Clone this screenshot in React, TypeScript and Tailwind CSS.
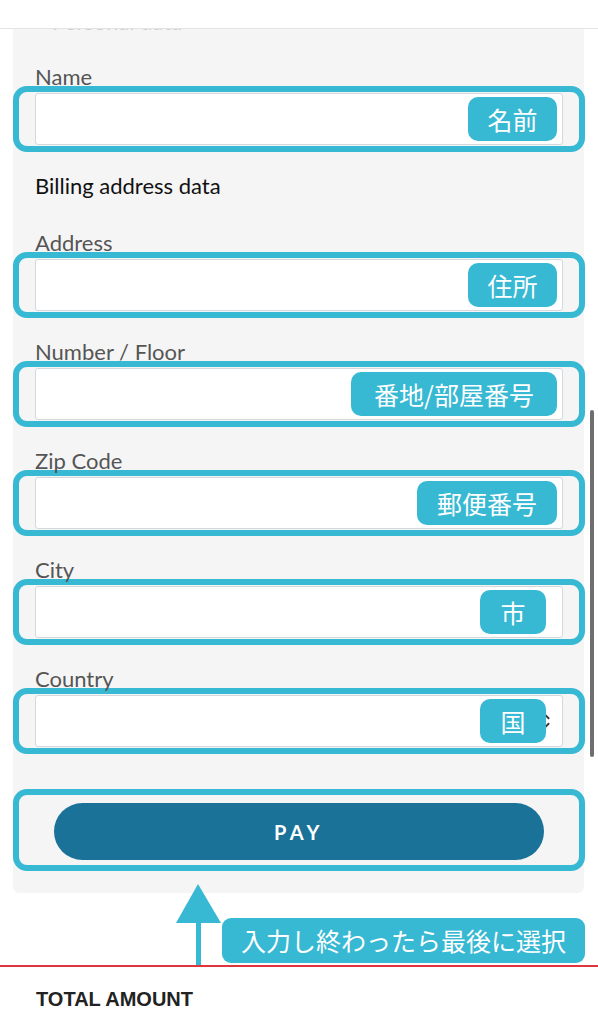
import React from 'react';
import { ChevronsUpDown } from 'lucide-react';

const fields = [
  { id: 'address', label: 'Address', badge: '住所', badgeW: 'w-[89px]', right: 'right-[5px]' },
  { id: 'number', label: 'Number / Floor', badge: '番地/部屋番号', badgeW: 'w-[206px]', right: 'right-[5px]' },
  { id: 'zip', label: 'Zip Code', badge: '郵便番号', badgeW: 'w-[140px]', right: 'right-[5px]' },
  { id: 'city', label: 'City', badge: '市', badgeW: 'w-[66px]', right: 'right-[16px]' },
  { id: 'country', label: 'Country', badge: '国', badgeW: 'w-[66px]', right: 'right-[16px]', select: true },
];

type FieldProps = {
  label: string;
  badge: string;
  badgeW: string;
  right: string;
  select?: boolean;
  className?: string;
};

function Field({ label, badge, badgeW, right, select, className }: FieldProps) {
  return (
    <div className={className}>
      <label className="block h-[21px] pl-[22px] text-[22px] leading-[24px] text-[#555]">
        {label}
      </label>
      {/* highlight frame */}
      <div className="w-[572px] rounded-[14px] border-[6px] border-[#37b8d3] px-[16px] py-[1px]">
        <div className="relative h-[52px] rounded-[3px] border border-[#d3d8dd] bg-white">
          {select && (
            <ChevronsUpDown
              size={22}
              strokeWidth={2}
              className="absolute right-[7px] top-1/2 -translate-y-1/2 text-[#333]"
            />
          )}
          <span
            className={`absolute top-1/2 -translate-y-1/2 ${right} ${badgeW} h-[44px] rounded-[10px] bg-[#37b8d3] flex items-center justify-center text-white text-[25px] leading-none font-['Noto_Sans_CJK_JP',sans-serif]`}
          >
            {badge}
          </span>
        </div>
      </div>
    </div>
  );
}

export default function App() {
  return (
    <div className="relative min-h-screen w-full overflow-hidden bg-white font-['Lato',sans-serif]">
      {/* top bar */}
      <div className="h-[29px] border-b border-[#e3e3e3] bg-white" />

      {/* form panel */}
      <div className="ml-[13px] w-[571px] rounded-b-[6px] bg-[#f5f5f5] pb-[22px]">
        {/* scrolled-away heading, only its bottom edge shows */}
        <div className="h-[3px] overflow-hidden pl-[39px]">
          <p className="-mt-[17px] text-[22px] leading-[20px] text-[#d0d0d0]">Personal data</p>
        </div>

        <Field label="Name" badge="名前" badgeW="w-[89px]" right="right-[5px]" className="mt-[33px]" />

        <p className="mt-[23px] h-[20px] pl-[22px] text-[22px] leading-[22px] text-[#111]">
          Billing address data
        </p>

        {fields.map((f, i) => (
          <Field
            key={f.id}
            label={f.label}
            badge={f.badge}
            badgeW={f.badgeW}
            right={f.right}
            select={f.select}
            className={i === 0 ? 'mt-[36px]' : 'mt-[22px]'}
          />
        ))}

        {/* pay button */}
        <div className="mt-[35px] w-[572px] rounded-[14px] border-[6px] border-[#37b8d3] pt-[8px] pb-[5px] px-[35px]">
          <button className="h-[57px] w-full rounded-full bg-[#1a7299] text-[20px] font-bold tracking-[0.22em] text-white">
            PAY
          </button>
        </div>
      </div>

      {/* annotation: arrow + callout */}
      <div className="relative h-[72px]">
        <svg className="absolute left-[176px] -top-[9px]" width="45" height="81" viewBox="0 0 45 81">
          <polygon points="22,0 0,39 45,39" fill="#37b8d3" />
          <rect x="20" y="39" width="5" height="42" fill="#37b8d3" />
        </svg>
        <div className="absolute left-[222px] top-[25px] flex h-[45px] w-[363px] items-center justify-center rounded-[9px] bg-[#37b8d3] text-[25px] leading-none text-white font-['Noto_Sans_CJK_JP',sans-serif]">
          入力し終わったら最後に選択
        </div>
      </div>

      <div className="h-[2px] bg-[#e0353d]" />

      <p className="mt-[21px] pl-[36px] text-[20px] leading-[22px] font-bold text-[#222] font-['Liberation_Sans',Arial,sans-serif]">
        TOTAL AMOUNT
      </p>

      {/* scrollbar thumb */}
      <div className="absolute left-[590px] top-[410px] h-[347px] w-[4px] rounded-full bg-[#6f6f6f]" />
    </div>
  );
}
